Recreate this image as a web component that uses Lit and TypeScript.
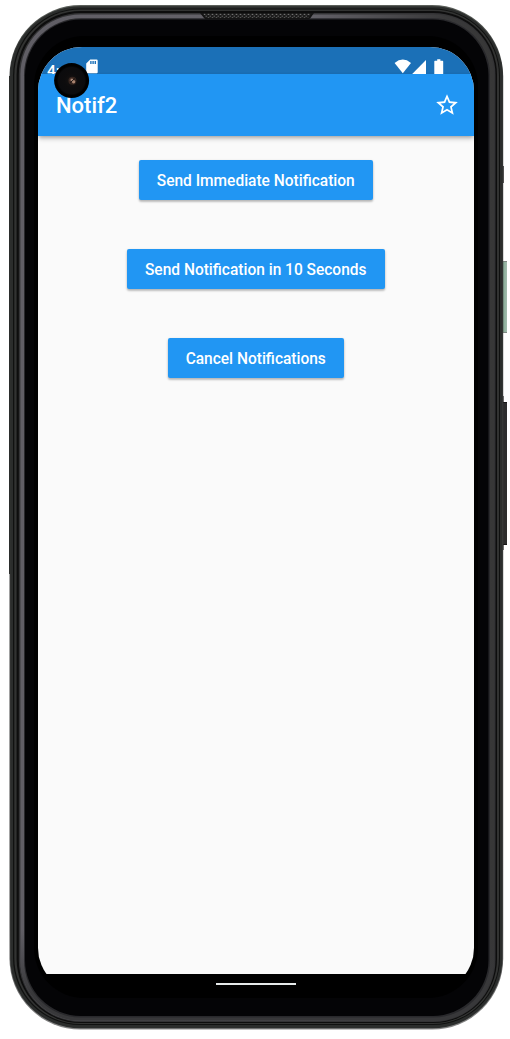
import { LitElement, html, css, svg } from "lit";
import { customElement, property } from "lit/decorators.js";

// left, top, right, bottom, corner radius, fill
type Layer = [number, number, number, number, number, string];

const LAYERS: Layer[] = [
  [9.5, 5, 503.2, 1029.6, 71, "url(#rim)"],
  [10.3, 6.2, 502.4, 1028.3, 70, "#2b2d2c"],
  [13, 8.6, 500, 1025, 67, "#101110"],
  [14.3, 9.6, 499, 1024, 66, "#323332"],
  [16.6, 11, 497, 1023, 64, "#0d0d0d"],
  [18.8, 13, 495.5, 1022, 62, "#333335"],
  [20.4, 14.4, 494, 1020.8, 60, "url(#shine)"],
  [24, 18.3, 490, 1017.6, 57, "#29292c"],
  [25, 19.6, 488.5, 1016, 56, "#040406"],
  [34, 36, 478, 998, 50, "#000"],
];

@customElement("phone-frame")
export class PhoneFrame extends LitElement {
  static styles = css`
    :host { display: block; }
    svg { display: block; }
  `;

  render() {
    return html`<svg width="510" height="1039" viewBox="0 0 510 1039" aria-hidden="true">
      <defs>
        <linearGradient id="rim" x1="0" y1="0" x2="0" y2="1">
          <stop offset="0" stop-color="#5c605b"></stop>
          <stop offset="0.06" stop-color="#333534"></stop>
          <stop offset="0.9" stop-color="#4a4a4a"></stop>
          <stop offset="1" stop-color="#858585"></stop>
        </linearGradient>
        <linearGradient id="shine" gradientUnits="userSpaceOnUse" x1="20" y1="0" x2="494" y2="0">
          <stop offset="0" stop-color="#605e65"></stop>
          <stop offset="0.6" stop-color="#65636a"></stop>
          <stop offset="0.9" stop-color="#39393a"></stop>
          <stop offset="1" stop-color="#373737"></stop>
        </linearGradient>
        <linearGradient id="underside" x1="0" y1="0" x2="0" y2="1">
          <stop offset="0" stop-color="#38383a" stop-opacity="0"></stop>
          <stop offset="0.7" stop-color="#38383a"></stop>
        </linearGradient>
        <linearGradient id="power" x1="0" y1="0" x2="1" y2="0">
          <stop offset="0" stop-color="#6f8f7d"></stop>
          <stop offset="0.5" stop-color="#8fb09d"></stop>
          <stop offset="1" stop-color="#a3bcae"></stop>
        </linearGradient>
        <pattern id="mesh" width="4" height="4" patternUnits="userSpaceOnUse" x="203" y="13">
          <rect width="4" height="4" fill="#1c1c1c"></rect>
          <circle cx="1.5" cy="1.2" r="0.9" fill="#707070"></circle>
          <circle cx="3.2" cy="3.2" r="0.7" fill="#5c5c5c"></circle>
        </pattern>
      </defs>
      <rect x="502" y="166" width="2" height="17" fill="#555"></rect>
      <rect x="502" y="261" width="5" height="72" fill="url(#power)"></rect>
      <path d="M503 261.5h4M503 332.5h4" stroke="#7d8781"></path>
      <rect x="502" y="396" width="2" height="154" fill="#777"></rect>
      <rect x="502" y="402" width="5" height="143" fill="#2c2c2c"></rect>
      <path d="M503 402.5h4M503 544.5h4" stroke="#151515"></path>
      ${LAYERS.map(
        ([l, t, r, b, rad, fill], i) => svg`
          <rect x=${l} y=${t} width=${r - l} height=${b - t} rx=${rad} fill=${fill}></rect>
          ${i === 6
            ? svg`<path d="M20.4 930H494V960.8A60 60 0 0 1 434 1020.8H80.4A60 60 0 0 1 20.4 960.8z" fill="url(#underside)"></path>`
            : null}`
      )}
      <rect x="9" y="76" width="1.4" height="498" fill="#2b2d2c"></rect>
      <path d="M200 13h114l-3.5 5q-1 1.3-3 1.3H207q-2 0-3-1.3z" fill="#141414"></path>
      <path d="M203 13.8h108l-3 4.2H206z" fill="url(#mesh)"></path>
    </svg>`;
  }
}

@customElement("status-bar")
export class StatusBar extends LitElement {
  static styles = css`
    :host {
      display: flex;
      box-sizing: border-box;
      height: 27px;
      padding: 12px 30px 0 9px;
      overflow: hidden;
      background: #1b70b7;
      color: #fff;
    }
    .time {
      width: 39px;
      font: 500 15.5px/24px Roboto, sans-serif;
    }
    svg { display: block; flex: none; }
    .status { margin-left: auto; }
  `;

  render() {
    return html`
      <span class="time">4:</span>
      <svg width="12" height="15" viewBox="0 0 12 15" fill="#fff">
        <path fill-rule="evenodd" d="M4.2.6H10.6q1.1 0 1.1 1.1V13.2q0 1.1-1.1 1.1H1.3Q.2 14.3.2 13.2V4.6zM4.2 1.9V5H5.6V1.9zM6.4 1.9V5H7.8V1.9zM8.6 1.9V5H10V1.9z"></path>
      </svg>
      <svg class="status" width="50" height="15" viewBox="0 0 50 15" fill="#fff">
        <path d="M.6 4Q8.8-2.9 17 4L8.8 14.3z"></path>
        <path d="M32 1V15H18.2z"></path>
        <path d="M43.2.3h3.2v1.5h2.1q.7 0 .7.7V15H40.3V2.5q0-.7.7-.7h2.2z"></path>
      </svg>
    `;
  }
}

@customElement("app-bar")
export class AppBar extends LitElement {
  @property() heading = "";

  static styles = css`
    :host {
      display: flex;
      align-items: center;
      justify-content: space-between;
      box-sizing: border-box;
      height: 62px;
      padding: 0 14px 0 18px;
      background: #2196f3;
      color: #fff;
      box-shadow: 0 2px 4px -1px rgba(0, 0, 0, 0.28), 0 3px 5px rgba(0, 0, 0, 0.14);
    }
    h1 {
      margin: 2px 0 0;
      font: 500 22px/26px Roboto, sans-serif;
      transform: scaleY(1.04);
    }
    svg { display: block; }
  `;

  render() {
    return html`
      <h1>${this.heading}</h1>
      <svg width="26" height="26" viewBox="0 0 24 24" fill="#fff" role="img" aria-label="Favorite">
        <path d="M22 9.24l-7.19-.62L12 2 9.19 8.63 2 9.24l5.46 4.73L5.82 21 12 17.27 18.18 21l-1.63-7.03L22 9.24zM12 15.4l-3.76 2.27 1-4.28-3.32-2.88 4.38-.38L12 6.1l1.71 4.04 4.38.38-3.32 2.88 1 4.28L12 15.4z"></path>
      </svg>
    `;
  }
}

@customElement("raised-button")
export class RaisedButton extends LitElement {
  static styles = css`
    :host { display: block; }
    button {
      display: block;
      height: 40px;
      padding: 0 18px 0 17.5px;
      border: 0;
      border-radius: 2px;
      background: #2196f3;
      color: #fff;
      font: 500 15.5px/40px Roboto, sans-serif;
      white-space: nowrap;
      box-shadow: 0 2px 2px rgba(0, 0, 0, 0.17), 0 1px 3px rgba(0, 0, 0, 0.17);
    }
    .label {
      display: block;
      padding-top: 1px;
      transform: scaleY(1.07);
    }
  `;

  render() {
    return html`<button><span class="label"><slot></slot></span></button>`;
  }
}

@customElement("camera-hole")
export class CameraHole extends LitElement {
  static styles = css`
    :host { display: block; }
    svg { display: block; }
  `;

  render() {
    return html`<svg width="36" height="36" viewBox="0 0 36 36" aria-hidden="true">
      <defs>
        <radialGradient id="lens">
          <stop offset="0" stop-color="#171312"></stop>
          <stop offset="0.4" stop-color="#0d0c0d"></stop>
          <stop offset="0.75" stop-color="#0b0b0d"></stop>
          <stop offset="0.85" stop-color="#000"></stop>
        </radialGradient>
      </defs>
      <circle cx="17.6" cy="17.6" r="17.5" fill="url(#lens)"></circle>
      <circle cx="18.4" cy="17.8" r="4" fill="#35251f"></circle>
      <path d="M15.5 17.5Q15.6 15.2 18 15L19.5 16 17 18.6z" fill="#6b4c40"></path>
      <circle cx="19.6" cy="18.8" r="1.7" fill="#a98470"></circle>
      <circle cx="18" cy="17" r="0.9" fill="#c5aa98"></circle>
      <path d="M16 19.8L20.8 15.5" stroke="#1b1210" stroke-width="0.9"></path>
    </svg>`;
  }
}

@customElement("app-root")
export class AppRoot extends LitElement {
  static styles = css`
    :host {
      display: grid;
      width: 510px;
      height: 1039px;
      background: #fff;
      overflow: hidden;
    }
    phone-frame, .device { grid-area: 1 / 1; }
    .device {
      display: flex;
      flex-direction: column;
      align-items: center;
      box-sizing: border-box;
      padding: 47px 36px 0 38px;
    }
    .viewport {
      position: relative;
      width: 436px;
      height: 927px;
      overflow: hidden;
    }
    .screen {
      height: 945px;
      border-radius: 44px;
      overflow: hidden;
      background: #fafafa;
    }
    camera-hole {
      position: absolute;
      left: 16px;
      top: 16px;
    }
    .actions {
      display: flex;
      flex-direction: column;
      align-items: center;
      gap: 49px;
      padding-top: 24px;
    }
    .home {
      width: 80px;
      height: 2px;
      margin-top: 9px;
      background: #e6eaea;
    }
  `;

  render() {
    return html`
      <phone-frame></phone-frame>
      <div class="device">
        <div class="viewport">
          <div class="screen">
            <status-bar></status-bar>
            <app-bar heading="Notif2"></app-bar>
            <div class="actions">
              <raised-button>Send Immediate Notification</raised-button>
              <raised-button>Send Notification in 10 Seconds</raised-button>
              <raised-button>Cancel Notifications</raised-button>
            </div>
          </div>
          <camera-hole></camera-hole>
        </div>
        <div class="home"></div>
      </div>
    `;
  }
}
